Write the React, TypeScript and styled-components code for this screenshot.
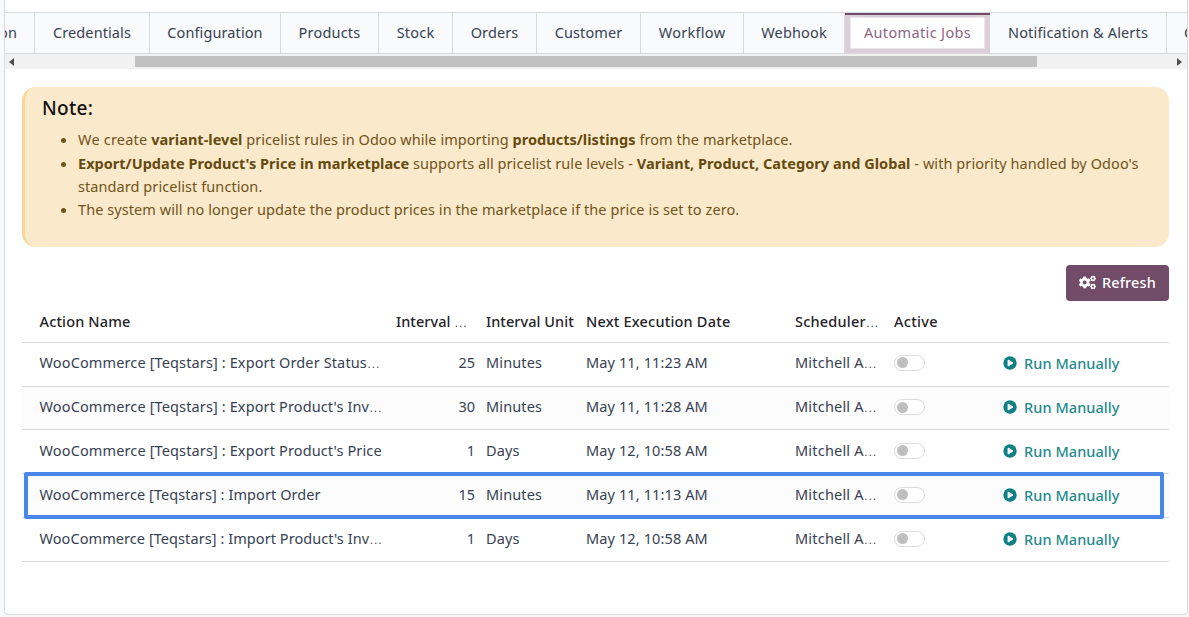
import React from "react";
import styled, { createGlobalStyle, css } from "styled-components";
import { FaCogs } from "react-icons/fa";

const GlobalStyle = createGlobalStyle`
  *, *::before, *::after { box-sizing: border-box; }
  html, body { margin: 0; padding: 0; }
  body {
    width: 1189px;
    height: 617px;
    overflow: hidden;
    background: #f9fafb;
    color: #374151;
    font-family: "Noto Sans", "Open Sans", sans-serif;
    font-size: 14.5px;
  }
`;

const Page = styled.div`
  height: 617px;
  padding: 0 1px 2px 4px;
  display: flex;
  background: #f8f9fa;
`;

const Sheet = styled.main`
  flex: 1;
  min-width: 0;
  display: flex;
  flex-direction: column;
  padding-top: 12px;
  background: #fff;
  border: 1px solid #d8dadd;
  border-top: 0;
  border-radius: 0 0 4px 4px;
`;

const TabStrip = styled.nav`
  display: flex;
  height: 42px;
  overflow: hidden;
  background: #f9fafb;
  border-top: 1px solid #d8dadd;
  border-bottom: 1px solid #d8dadd;
`;

const Tab = styled.button<{ $width: number; $track?: number; $active?: boolean; $align?: string }>`
  flex: none;
  width: ${(p) => p.$width}px;
  height: 40px;
  padding: 0 ${(p) => (p.$align ? 17 : 0)}px 2px ${(p) => (p.$align === "flex-start" ? 17 : 0)}px;
  display: flex;
  align-items: center;
  justify-content: ${(p) => p.$align ?? "center"};
  border: 0;
  border-right: 1px solid #d8dadd;
  background: #f9fafb;
  color: #374151;
  font: inherit;
  white-space: nowrap;
  letter-spacing: ${(p) => p.$track ?? 0.1}px;
  ${(p) =>
    p.$active &&
    css`
      height: 42px;
      margin: -1px 0;
      color: #8a6681;
      background: #fff;
      border: 0;
      box-shadow: inset 0 3px 0 #714b67, inset 0 -1px 0 #fff, inset 0 0 0 5px #dbd0d9,
        inset 0 0 0 6px #ece6eb;
    `}
`;

const ScrollTrack = styled.div`
  height: 15px;
  flex: none;
  display: flex;
  align-items: center;
  background: #f1f1f1;
  padding: 0 5px 0 4px;
`;

const ScrollThumb = styled.div`
  width: 902px;
  height: 11px;
  margin-left: 121px;
  margin-right: auto;
  background: #c1c1c1;
`;

const Arrow = styled.svg`
  display: block;
  width: 5px;
  height: 8px;
  fill: #505050;
`;

const Body = styled.section`
  padding: 18px 18px 0 17px;
  display: flex;
  flex-direction: column;
`;

const Note = styled.aside`
  height: 160px;
  padding: 9px 20px 0 18px;
  border-left: 3px solid #f9d795;
  border-radius: 14px;
  background: #fbe9cc;
  color: #705319;
`;

const NoteTitle = styled.h2`
  margin: 0 0 0 -1px;
  font-size: 19px;
  line-height: 25px;
  font-weight: 500;
  color: #111;
  letter-spacing: 0.3px;
`;

const NoteList = styled.ul`
  margin: 7.3px 0 0;
  padding: 0 0 0 35px;
  line-height: 23.3px;
`;

const Run = styled.span<{ $track?: number; $strong?: boolean }>`
  letter-spacing: ${(p) => p.$track ?? 0.07}px;
  ${(p) =>
    p.$strong &&
    css`
      font-weight: 700;
      color: #654a0e;
    `}
`;

const Toolbar = styled.div`
  display: flex;
  justify-content: flex-end;
  margin-top: 18px;
`;

const RefreshButton = styled.button`
  width: 103px;
  height: 36px;
  display: flex;
  align-items: center;
  padding: 0 0 2px 13px;
  gap: 6px;
  border: 0;
  border-radius: 4px;
  background: #714b67;
  color: #fff;
  font: inherit;
  font-weight: 500;
  letter-spacing: 0.15px;
`;

const Row = styled.div<{ $height: number; $lift?: number; $striped?: boolean; $head?: boolean }>`
  position: relative;
  display: grid;
  grid-template-columns: 356.5px 79px 11px 100px 209px 99px 109px 1fr;
  align-items: center;
  height: ${(p) => p.$height}px;
  padding: 0 0 ${(p) => p.$lift ?? 4}px 17.5px;
  border-bottom: 1px solid #d8dadd;
  background: ${(p) => (p.$striped ? "#fcfcfc" : "#fff")};
  ${(p) =>
    p.$head &&
    css`
      color: #1f2328;
      font-weight: 500;
    `}
`;

const Cell = styled.div<{ $right?: boolean; $track?: number; $span?: number }>`
  white-space: nowrap;
  line-height: 22px;
  letter-spacing: ${(p) => p.$track ?? 0}px;
  text-align: ${(p) => (p.$right ? "right" : "left")};
  ${(p) =>
    p.$span &&
    css`
      grid-column: span ${p.$span};
    `}
`;

const Dots = styled.span`
  font-size: 18.5px;
  font-weight: 200;
  line-height: 0;
`;

const Highlight = styled.div`
  position: absolute;
  left: 2px;
  right: 5px;
  top: -2px;
  bottom: -2px;
  border: 4px solid #4a86e8;
  border-radius: 2px;
  z-index: 1;
`;

const Switch = styled.span`
  display: flex;
  align-items: center;
  width: 31px;
  height: 16px;
  margin-top: 2px;
  padding-left: 2px;
  border: 1px solid #dcdddf;
  border-radius: 8px;
  background: #fff;
  &::before {
    content: "";
    width: 11px;
    height: 11px;
    border-radius: 50%;
    background: #bfbfbf;
  }
`;

const RunLink = styled.a`
  display: flex;
  align-items: center;
  gap: 7px;
  padding-top: 2px;
  color: #1f8a8c;
  font-weight: 500;
  white-space: nowrap;
  line-height: 22px;
  letter-spacing: 0.07px;
`;

const PlayIcon = () => (
  <svg width="14" height="14" viewBox="0 0 14 14">
    <circle cx="7" cy="7" r="6.7" fill="#0f8086" />
    <path d="M5.1 4 L10 7 L5.1 10 Z" fill="#fff" stroke="#fff" strokeWidth="1" strokeLinejoin="round" />
  </svg>
);

const GearsIcon = styled(FaCogs)`
  width: 17px;
  height: 15px;
`;

const tabs = [
  { label: "Credentials", width: 115 },
  { label: "Configuration", width: 131 },
  { label: "Products", width: 98, track: 0.2 },
  { label: "Stock", width: 74, track: 0.2 },
  { label: "Orders", width: 84 },
  { label: "Customer", width: 104 },
  { label: "Workflow", width: 103, track: 0.3 },
  { label: "Webhook", width: 101, track: 0.15 },
  { label: "Automatic Jobs", width: 145, track: 0.35, active: true },
  { label: "Notification & Alerts", width: 177, track: 0.15 },
];

const jobs = [
  { name: "WooCommerce [Teqstars] : Export Order Status", cut: true, track: 0.13, every: "25", unit: "Minutes", next: "May 11, 11:23 AM", height: 44, lift: 6 },
  { name: "WooCommerce [Teqstars] : Export Product's Inv", cut: true, track: 0.13, every: "30", unit: "Minutes", next: "May 11, 11:28 AM", height: 43 },
  { name: "WooCommerce [Teqstars] : Export Product's Price", track: 0.13, every: "1", unit: "Days", next: "May 12, 10:58 AM", height: 44 },
  { name: "WooCommerce [Teqstars] : Import Order", track: 0.08, every: "15", unit: "Minutes", next: "May 11, 11:13 AM", height: 44, marked: true },
  { name: "WooCommerce [Teqstars] : Import Product's Inv", cut: true, track: 0.07, every: "1", unit: "Days", next: "May 12, 10:58 AM", height: 44 },
];

export default function App() {
  return (
    <>
      <GlobalStyle />
      <Page>
        <Sheet>
          <TabStrip>
            <Tab $width={30} $align="flex-end">Information</Tab>
            {tabs.map((t) => (
              <Tab key={t.label} $width={t.width} $track={t.track} $active={t.active}>
                {t.label}
              </Tab>
            ))}
            <Tab $width={120} $align="flex-start">Category</Tab>
          </TabStrip>
          <ScrollTrack>
            <Arrow viewBox="0 0 5 8"><path d="M5 0v8L0 4z" /></Arrow>
            <ScrollThumb />
            <Arrow viewBox="0 0 5 8"><path d="M0 0v8l5-4z" /></Arrow>
          </ScrollTrack>
          <Body>
            <Note>
              <NoteTitle>Note:</NoteTitle>
              <NoteList>
                <li>
                  <Run $track={0.2}>We create </Run>
                  <Run $strong $track={0.03}>variant-level</Run>
                  <Run $track={0.05}> pricelist rules in Odoo while importing </Run>
                  <Run $strong $track={0.03}>products/listings</Run>
                  <Run $track={0.07}> from the marketplace.</Run>
                </li>
                <li>
                  <Run $strong $track={0.02}>Export/Update Product's Price in marketplace</Run>
                  <Run $track={0.05}> supports all pricelist rule levels - </Run>
                  <Run $strong $track={0.04}>Variant, Product, Category and Global</Run>
                  <Run> - with priority handled by Odoo's</Run>
                  <br />
                  <Run>standard pricelist function.</Run>
                </li>
                <li>
                  <Run>The system will no longer update the product prices in the marketplace if the price is set to zero.</Run>
                </li>
              </NoteList>
            </Note>
            <Toolbar>
              <RefreshButton><GearsIcon />Refresh</RefreshButton>
            </Toolbar>
            <Row $height={42} $lift={2} $head>
              <Cell $track={0.15}>Action Name</Cell>
              <Cell $span={2} $track={0.05}>Interval <Dots>…</Dots></Cell>
              <Cell $track={0.05}>Interval Unit</Cell>
              <Cell $track={0.2}>Next Execution Date</Cell>
              <Cell $track={0.2}>Scheduler<Dots>…</Dots></Cell>
              <Cell $track={0.3}>Active</Cell>
            </Row>
            {jobs.map((j, i) => (
              <Row key={j.name} $height={j.height} $lift={j.lift} $striped={i % 2 === 1}>
                <Cell $track={j.track}>
                  {j.name}
                  {j.cut && <Dots>…</Dots>}
                </Cell>
                <Cell $right>{j.every}</Cell>
                <span />
                <Cell $track={0.12}>{j.unit}</Cell>
                <Cell $track={0.12}>{j.next}</Cell>
                <Cell $track={0.2}>Mitchell A<Dots>…</Dots></Cell>
                <Switch />
                <RunLink><PlayIcon />Run Manually</RunLink>
                {j.marked && <Highlight />}
              </Row>
            ))}
          </Body>
        </Sheet>
      </Page>
    </>
  );
}
